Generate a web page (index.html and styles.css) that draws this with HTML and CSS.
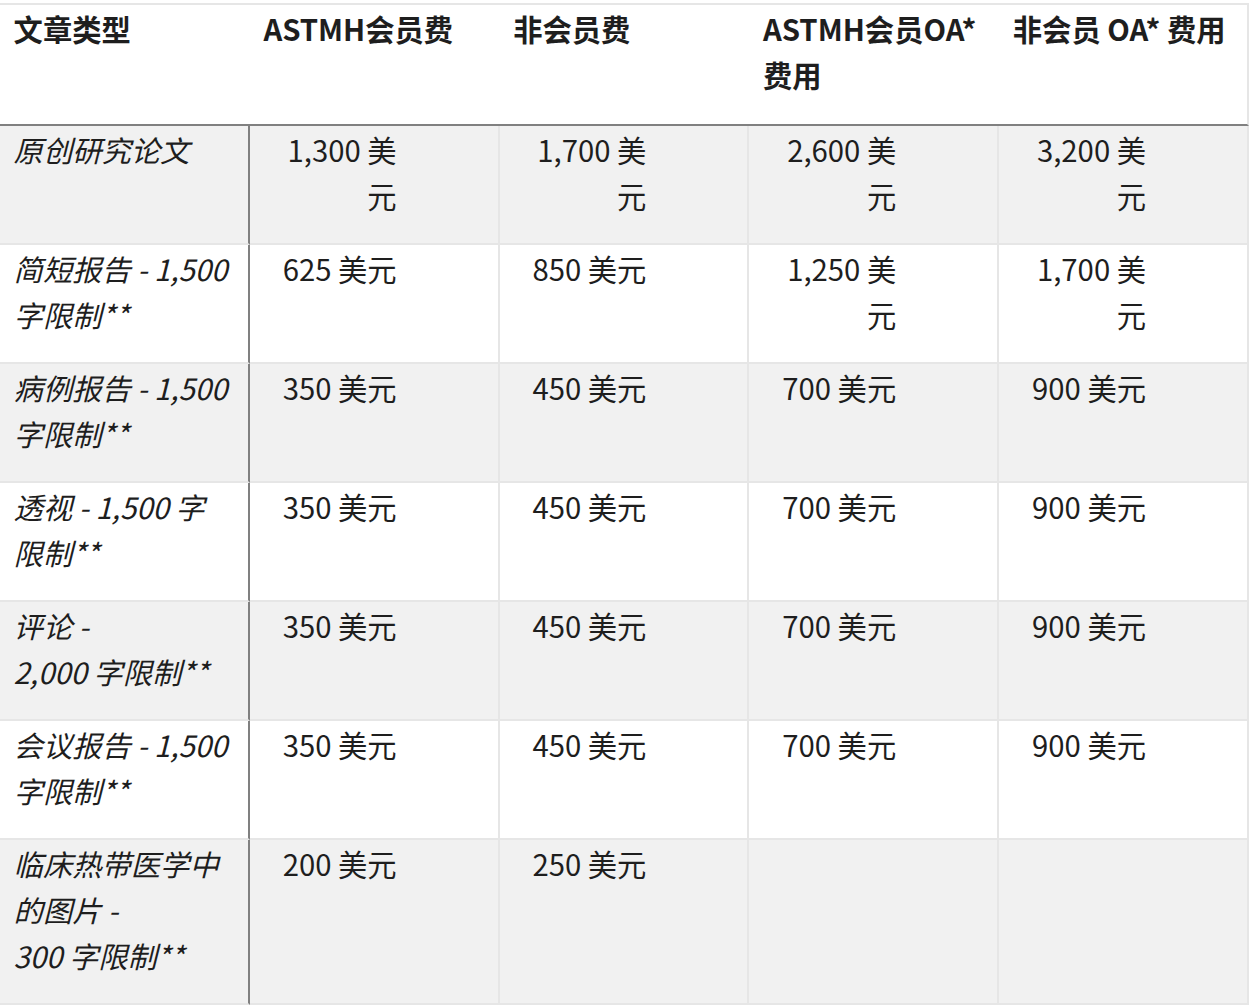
FILE: index.html
```html
<!DOCTYPE html>
<html lang="zh-CN">
<head>
<meta charset="utf-8">
<title>文章类型费用</title>
<link rel="stylesheet" href="styles.css">
</head>
<body>
<table class="fees">
  <thead>
    <tr>
      <th>文章类型</th>
      <th>ASTMH会员费</th>
      <th>非会员费</th>
      <th>ASTMH会员OA*<br>费用</th>
      <th>非会员 OA* 费用</th>
    </tr>
  </thead>
  <tbody>
    <tr class="shade">
      <td class="type">原创研究论文</td>
      <td class="num">1,300 美<br>元</td>
      <td class="num">1,700 美<br>元</td>
      <td class="num">2,600 美<br>元</td>
      <td class="num">3,200 美<br>元</td>
    </tr>
    <tr>
      <td class="type">简短报告 - 1,500<br>字限制**</td>
      <td class="num">625 美元</td>
      <td class="num">850 美元</td>
      <td class="num">1,250 美<br>元</td>
      <td class="num">1,700 美<br>元</td>
    </tr>
    <tr class="shade">
      <td class="type">病例报告 - 1,500<br>字限制**</td>
      <td class="num">350 美元</td>
      <td class="num">450 美元</td>
      <td class="num">700 美元</td>
      <td class="num">900 美元</td>
    </tr>
    <tr>
      <td class="type">透视 - 1,500 字<br>限制**</td>
      <td class="num">350 美元</td>
      <td class="num">450 美元</td>
      <td class="num">700 美元</td>
      <td class="num">900 美元</td>
    </tr>
    <tr class="shade">
      <td class="type">评论 -<br>2,000 字限制**</td>
      <td class="num">350 美元</td>
      <td class="num">450 美元</td>
      <td class="num">700 美元</td>
      <td class="num">900 美元</td>
    </tr>
    <tr>
      <td class="type">会议报告 - 1,500<br>字限制**</td>
      <td class="num">350 美元</td>
      <td class="num">450 美元</td>
      <td class="num">700 美元</td>
      <td class="num">900 美元</td>
    </tr>
    <tr class="shade">
      <td class="type">临床热带医学中<br>的图片 -<br>300 字限制**</td>
      <td class="num">200 美元</td>
      <td class="num">250 美元</td>
      <td class="num"></td>
      <td class="num"></td>
    </tr>
  </tbody>
</table>
</body>
</html>
```

FILE: styles.css
```css
html, body {
  margin: 0;
  padding: 0;
  background: #ffffff;
}

body {
  padding-top: 3px;
  font-family: "Noto Sans CJK SC", "Noto Sans", sans-serif;
  color: #1e1e1e;
}

.fees {
  width: 1249px;
  table-layout: fixed;
  border-collapse: separate;
  border-spacing: 0;
  border-top: 2px solid #e6e6e6;
  font-size: 29.3px;
  line-height: 46.08px;
}

.fees th,
.fees td {
  vertical-align: top;
  text-align: left;
  border-bottom: 2px solid #e6e6e6;
}

.fees td {
  border-right: 2px solid #e6e6e6;
  padding: 0 13.6px 24.9px 13.6px;
  font-weight: 400;
}

.fees th {
  font-weight: 700;
  background: #ffffff;
  padding: 0 13.6px 26.8px 13.6px;
  border-bottom-color: #808080;
}

.fees th:last-child {
  border-right: 2px solid #e6e6e6;
}

.fees td.type {
  font-style: italic;
  border-right-color: #808080;
}

.fees td.num {
  text-align: right;
  padding-right: 101px;
}

.fees tr.shade td {
  background: #f1f1f1;
}
```
